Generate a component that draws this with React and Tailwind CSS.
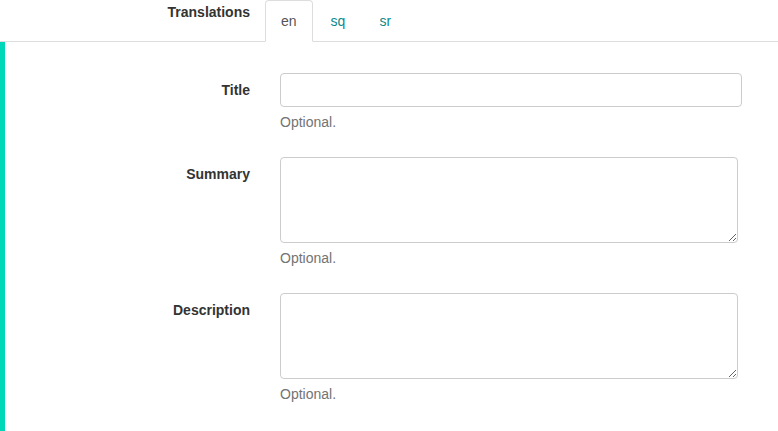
import React from 'react';

const tabs = ['en', 'sq', 'sr'];

function Field({ label, multiline }) {
  return (
    <div className="flex mb-[15px]">
      <label className="w-[245px] shrink-0 pt-[7px] text-right font-bold text-[#333] leading-5">
        {label}
      </label>
      <div className="ml-[30px]">
        {multiline ? (
          <textarea
            className="block w-[458px] h-[86px] rounded border border-[#ccc] px-3 py-1.5 outline-none"
          />
        ) : (
          <input
            type="text"
            className="block w-[462px] h-[34px] rounded border border-[#ccc] px-3 py-1.5 outline-none"
          />
        )}
        <p className="mt-[5px] mb-[10px] leading-5 text-[#737373]">Optional.</p>
      </div>
    </div>
  );
}

export default function App() {
  return (
    <div className="h-screen flex flex-col bg-white text-[14px] font-['Liberation_Sans',Arial,sans-serif] overflow-hidden">
      {/* Tabs row */}
      <div className="flex border-b border-[#ddd]">
        <div className="w-[250px] shrink-0 pt-[2px] text-right font-bold text-[#333] leading-5">
          Translations
        </div>
        <ul className="flex ml-[15px]">
          {tabs.map((t, i) => (
            <li key={t} className="-mb-px">
              <a
                className={
                  i === 0
                    ? 'block mr-[2px] px-[15px] py-[10px] leading-5 rounded-t border border-[#ddd] border-b-white bg-white text-[#555]'
                    : 'block mr-[2px] px-[15px] py-[10px] leading-5 rounded-t border border-transparent text-[#0e8a8a]'
                }
              >
                {t}
              </a>
            </li>
          ))}
        </ul>
      </div>

      {/* Form body */}
      <div className="flex-1 border-l-[5px] border-[#00d6b8] pt-[31px]">
        <Field label="Title" />
        <Field label="Summary" multiline />
        <Field label="Description" multiline />
      </div>
    </div>
  );
}
